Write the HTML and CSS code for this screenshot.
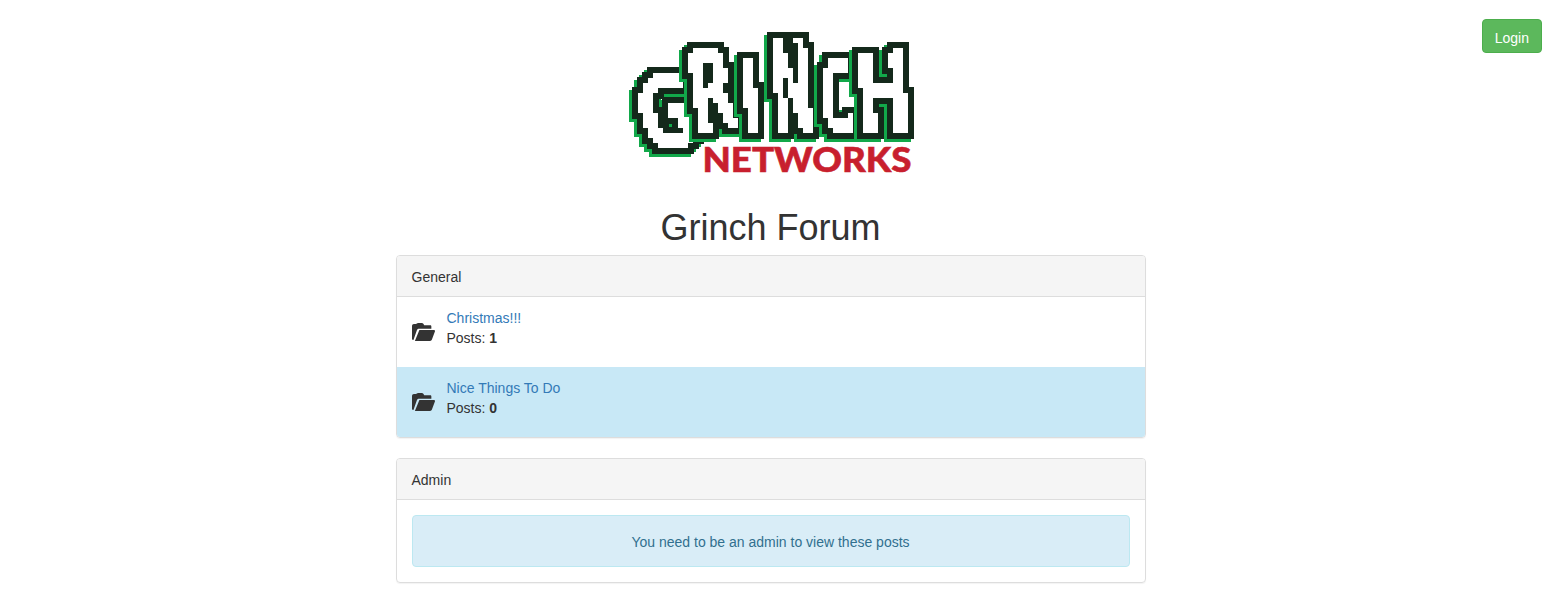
FILE: index.html
```html
<!DOCTYPE html>
<html lang="en">
<head>
<meta charset="utf-8">
<title>Grinch Forum</title>
<link rel="stylesheet" href="styles.css">
</head>
<body>
<a class="login" href="#">Login</a>
<main class="page">
  <div class="logo-wrap">
    <svg class="logo" width="300" height="160" viewBox="0 0 300 160" role="img" aria-label="Grinch Networks">
      <defs>
        <filter id="outline" filterUnits="userSpaceOnUse" x="0" y="0" width="300" height="160" color-interpolation-filters="sRGB">
          <feFlood x="2" y="2" width="1" height="1" flood-color="#000"/>
          <feComposite width="5" height="5"/>
          <feTile result="grid"/>
          <feComposite in="SourceAlpha" in2="grid" operator="in"/>
          <feComponentTransfer result="hard">
            <feFuncA type="discrete" tableValues="0 1 1 1"/>
          </feComponentTransfer>
          <feMorphology in="hard" operator="dilate" radius="2" result="blocks"/>
          <feMorphology in="blocks" operator="dilate" radius="6" result="mid"/>
          <feOffset in="mid" dx="-3" dy="3" result="fatPos"/>
          <feFlood flood-color="#12a84a" result="green"/>
          <feComposite in="green" in2="fatPos" operator="in" result="greenShape"/>
          <feFlood flood-color="#14291b" result="dark"/>
          <feComposite in="dark" in2="mid" operator="in" result="darkShape"/>
          <feFlood flood-color="#fff" result="white"/>
          <feComposite in="white" in2="blocks" operator="in" result="whiteShape"/>
          <feMerge>
            <feMergeNode in="greenShape"/>
            <feMergeNode in="darkShape"/>
            <feMergeNode in="whiteShape"/>
          </feMerge>
        </filter>
      </defs>
      <g class="grinch">
        <g filter="url(#outline)"><text transform="translate(23 126) rotate(-12) scale(1 1.48)">G</text></g>
        <g filter="url(#outline)"><text transform="translate(71 106) rotate(-8) scale(.88 1.62)">R</text></g>
        <g filter="url(#outline)"><text transform="translate(119 107) rotate(-3) scale(.8 1.5)">I</text></g>
        <g filter="url(#outline)"><text transform="translate(152 107) rotate(-5) scale(.72 1.84)">N</text></g>
        <g filter="url(#outline)"><text transform="translate(199 107) rotate(-4) scale(.66 1.48)">C</text></g>
        <g filter="url(#outline)"><text transform="translate(235 107) rotate(-4) scale(.96 1.6)">H</text></g>
      </g>
      <text class="networks" x="79.500" y="144" textLength="209" lengthAdjust="spacingAndGlyphs">NETWORKS</text>
    </svg>
  </div>
  <h1 class="title">Grinch Forum</h1>

  <section class="panel">
    <header class="panel-head">General</header>
    <div class="row">
      <svg class="folder" width="23" height="18" viewBox="0 0 24 19" preserveAspectRatio="none"><path d="M0 3.200C0 2 .9 1 2 1h2.300C5.200.2 6 0 7 0h3c1 0 1.800.6 2.300 1.500L12.700 2.500H19c.7 0 1.200.5 1.200 1.200V6H7.500c-1.100 0-1.900.5-2.300 1.500L1.500 18H1c-.6 0-1-.5-1-1z"/><path d="M7.700 7.500H23c.8 0 1.200.6 1 1.300l-3.200 8.700c-.3.900-1 1.500-2 1.500H3z"/></svg>
      <div class="row-text"><a href="#">Christmas!!!</a><div>Posts: <b>1</b></div></div>
    </div>
    <div class="row row-info">
      <svg class="folder" width="23" height="18" viewBox="0 0 24 19" preserveAspectRatio="none"><path d="M0 3.200C0 2 .9 1 2 1h2.300C5.200.2 6 0 7 0h3c1 0 1.800.6 2.300 1.500L12.700 2.500H19c.7 0 1.200.5 1.200 1.200V6H7.500c-1.100 0-1.900.5-2.300 1.500L1.500 18H1c-.6 0-1-.5-1-1z"/><path d="M7.700 7.500H23c.8 0 1.200.6 1 1.300l-3.200 8.700c-.3.900-1 1.500-2 1.500H3z"/></svg>
      <div class="row-text"><a href="#">Nice Things To Do</a><div>Posts: <b>0</b></div></div>
    </div>
  </section>

  <section class="panel">
    <header class="panel-head">Admin</header>
    <div class="panel-body">
      <div class="alert">You need to be an admin to view these posts</div>
    </div>
  </section>
</main>
</body>
</html>
```
FILE: styles.css
```css
* { box-sizing: border-box; }
html, body { margin: 0; }
body {
  font-family: "Liberation Sans", Arial, sans-serif;
  font-size: 14px;
  line-height: 20px;
  color: #333;
  background: #fff;
}
a { color: #337ab7; text-decoration: none; }
.login {
  position: absolute;
  top: 19px;
  right: 13px;
  padding: 8px 12px 4px;
  border: 1px solid #4cae4c;
  border-radius: 4px;
  background: #5cb85c;
  color: #fff;
}
.page { width: 750px; margin-left: 395.5px; padding-top: 28px; }
.logo-wrap { display: flex; justify-content: center; height: 160px; padding-left: 5px; }
.logo { display: block; }
.grinch text {
  font-family: "DejaVu Sans", sans-serif;
  font-weight: 700;
  font-size: 70px;
  fill: #fff;
}
.networks {
  font-family: "Lato", sans-serif;
  font-weight: 900;
  font-size: 34.5px;
  fill: #c81f2e;
  stroke: #c81f2e;
  stroke-width: .6px;
}
.title {
  margin: 20px 0 7.400px;
  font-size: 36px;
  line-height: 39.6px;
  font-weight: 500;
  text-align: center;
}
.panel {
  margin-bottom: 20px;
  border: 1px solid #ddd;
  border-radius: 4px;
  box-shadow: 0 1px 1px rgba(0,0,0,.05);
}
.panel-head {
  padding: 11px 15px 9px;
  background: #f5f5f5;
  border-bottom: 1px solid #ddd;
  border-radius: 3px 3px 0 0;
}
.row {
  display: flex;
  align-items: center;
  gap: 12px;
  height: 70px;
  padding: 0 15px;
}
.row-info { background: #c8e8f6; border-radius: 0 0 3px 3px; }
.row-text { padding-bottom: 7px; }
.folder { fill: #333; flex: none; }
.panel-body { padding: 15px; }
.alert {
  padding: 16px 15px 14px;
  border: 1px solid #bce8f1;
  border-radius: 4px;
  background: #d9edf7;
  color: #31708f;
  text-align: center;
}
```
